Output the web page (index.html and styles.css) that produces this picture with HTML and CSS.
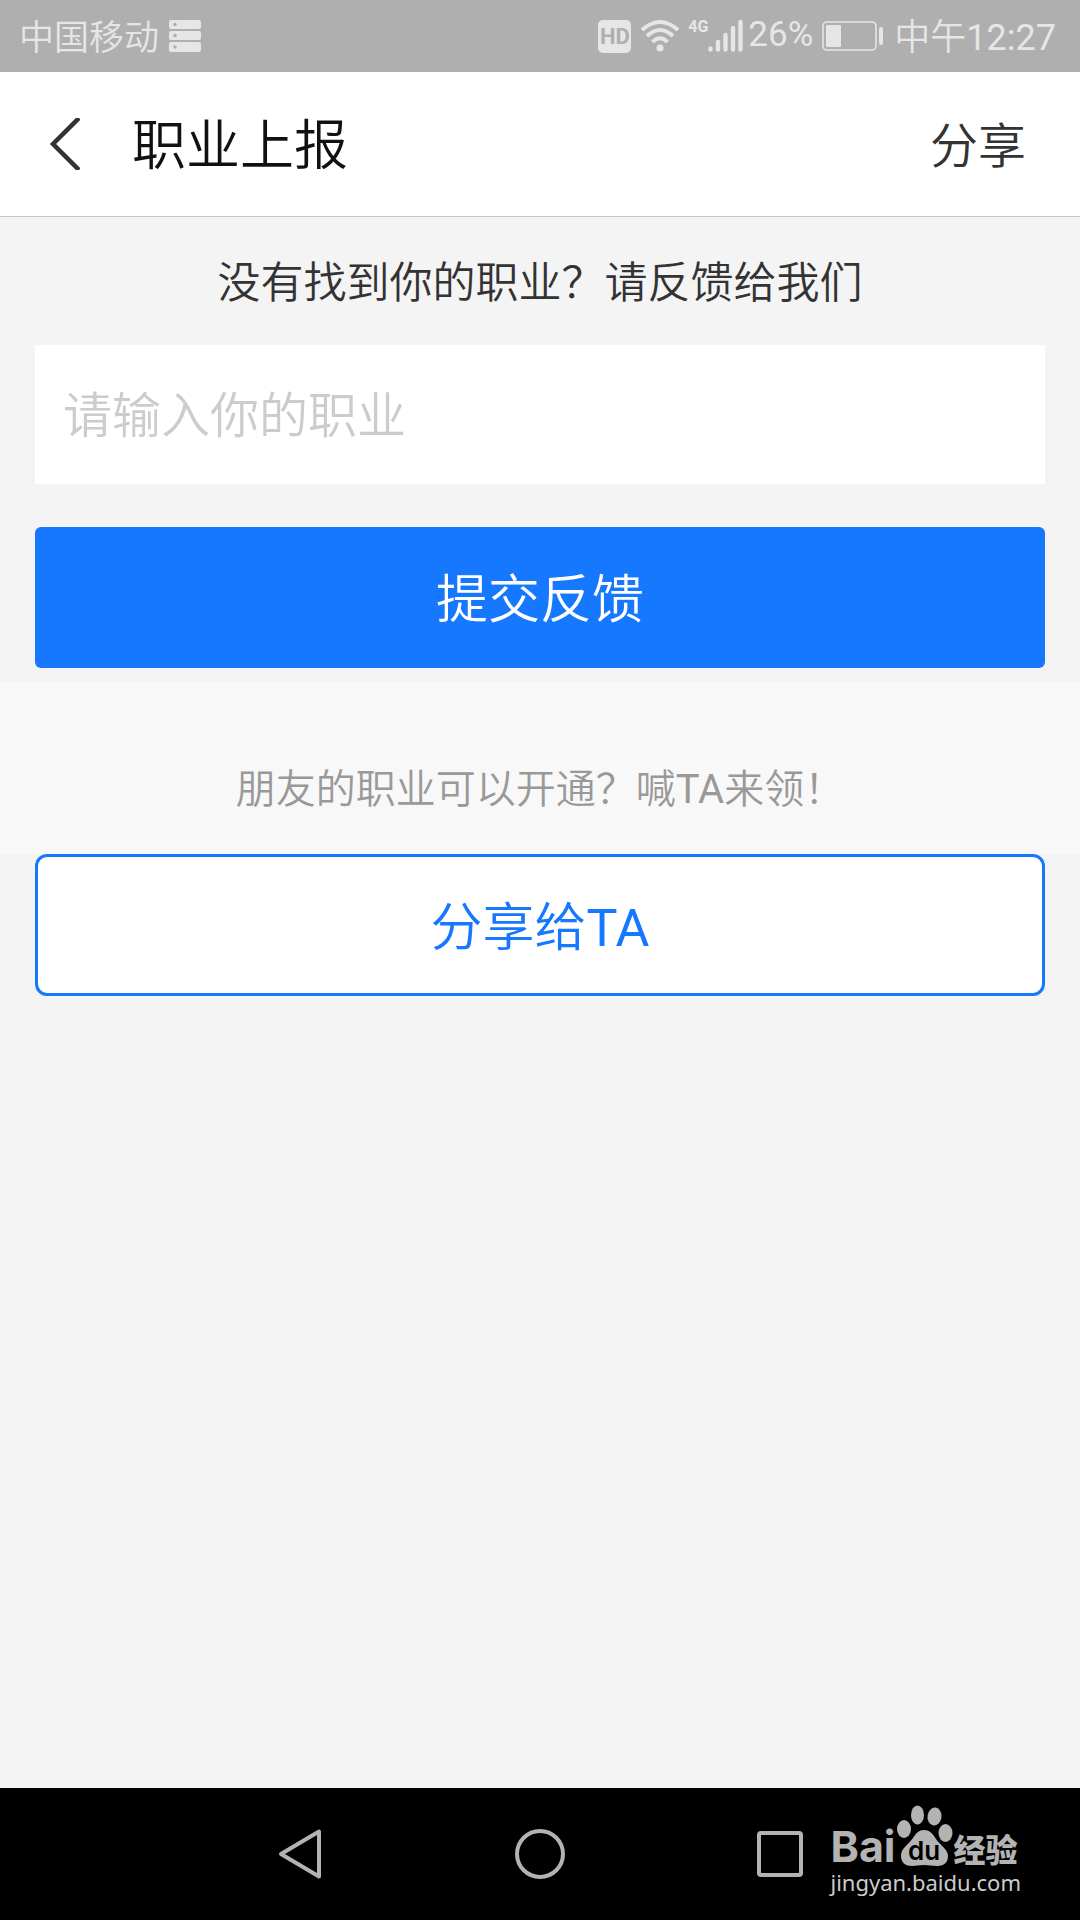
FILE: index.html
```html
<!DOCTYPE html>
<html lang="zh-CN">
<head>
<meta charset="utf-8">
<meta name="viewport" content="width=device-width, initial-scale=1">
<title>职业上报</title>
<link rel="stylesheet" href="styles.css">
</head>
<body>
<div class="status">
  <span class="status-text">中国移动</span>
  <svg class="disk" width="32" height="32" viewBox="0 0 32 32" aria-hidden="true">
    <g fill="#e6e6e6"><rect width="32" height="9" rx="2"/><rect y="11" width="32" height="9" rx="2"/><rect y="22" width="32" height="10" rx="2"/></g>
    <g fill="#afafaf"><circle cx="6" cy="4.500" r="1.800"/><circle cx="6" cy="15.500" r="1.800"/><circle cx="6" cy="27" r="1.800"/></g>
  </svg>
  <div class="status-right">
    <span class="hd">HD</span>
    <svg class="wifi" width="40" height="34" viewBox="0 0 40 34" aria-hidden="true">
      <g fill="none" stroke="#e6e6e6" stroke-width="4">
        <path d="M2 11Q20-5 38 11"/><path d="M7 17Q20 5 33 17"/><path d="M12.500 23Q20 15.500 27.500 23"/>
      </g>
      <circle cx="20" cy="29" r="3.500" fill="#e6e6e6"/>
    </svg>
    <span class="net">4G</span>
    <svg width="35" height="34" viewBox="0 0 35 34" aria-hidden="true">
      <g stroke="#e6e6e6" stroke-width="4.400" stroke-linecap="round">
        <path d="M2.500 29.500v1M10 23v7.500M17.500 16v14.500M25 9v21.500M32.500 3v27.500"/>
      </g>
    </svg>
    <span class="percent latin">26%</span>
    <svg class="battery" width="62" height="30" viewBox="0 0 62 30" aria-hidden="true">
      <rect x="1" y="1" width="53" height="28" rx="4" fill="none" stroke="#e6e6e6" stroke-width="1.600"/>
      <rect x="4" y="4" width="15" height="22" rx="1" fill="#e6e6e6"/>
      <rect x="57" y="6" width="4" height="18" rx="2" fill="#e6e6e6"/>
    </svg>
    <span class="status-text time">中午<span class="latin">12:27</span></span>
  </div>
</div>

<header class="header">
  <button class="back" type="button" aria-label="返回">
    <svg width="32" height="52" viewBox="0 0 32 52" aria-hidden="true"><path d="M31 0L5 26l26 26" fill="none" stroke="#333" stroke-width="4.500"/></svg>
  </button>
  <h1 class="title">职业上报</h1>
  <button class="share-link" type="button">分享</button>
</header>

<main class="main">
  <form class="report">
    <label class="prompt" for="job">没有找到你的职业？请反馈给我们</label>
    <input class="field" id="job" type="text" placeholder="请输入你的职业">
    <button class="btn submit" type="button">提交反馈</button>
  </form>
  <p class="note">朋友的职业可以开通？喊<span class="latin">TA</span>来领！</p>
  <div class="invite">
    <button class="btn outline" type="button">分享给<span class="latin">TA</span></button>
  </div>
</main>

<nav class="nav">
  <button class="key" type="button" aria-label="返回">
    <svg width="50" height="52" viewBox="0 0 50 52" aria-hidden="true"><path d="M44 3.500v45L6 26z" fill="none" stroke="#b3b3b3" stroke-width="4" stroke-linejoin="round"/></svg>
  </button>
  <button class="key" type="button" aria-label="主页">
    <svg width="50" height="52" viewBox="0 0 50 52" aria-hidden="true"><circle cx="25" cy="26" r="23" fill="none" stroke="#b3b3b3" stroke-width="4"/></svg>
  </button>
  <button class="key" type="button" aria-label="最近任务">
    <svg width="50" height="52" viewBox="0 0 50 52" aria-hidden="true"><rect x="4" y="5" width="42" height="42" rx="2" fill="none" stroke="#b3b3b3" stroke-width="4"/></svg>
  </button>
  <div class="mark">
    <div class="mark-logo">
      <span class="mark-bai">Bai</span>
      <svg class="paw" width="58" height="62" viewBox="0 0 58 62" role="img" aria-label="du">
        <g fill="#b3b3b3">
          <ellipse cx="8" cy="24" rx="7" ry="9"/><ellipse cx="21.500" cy="10" rx="6.500" ry="9.500"/>
          <ellipse cx="38.500" cy="11.500" rx="7" ry="9" transform="rotate(8 38.500 11.500)"/><ellipse cx="49.500" cy="28" rx="7" ry="9"/>
          <path d="M28 25c6 0 9 4 12 9 4 6 12 10 12 17 0 8-6 10-11 10-5 0-8-1-13-1s-8 1-12 1C10 61 5 58 5 51c0-8 7-11 12-18 3-5 6-8 11-8z"/>
        </g>
        <text class="mark-du" x="28" y="55" text-anchor="middle">du</text>
      </svg>
      <span class="mark-name">经验</span>
    </div>
    <span class="mark-url">jingyan.baidu.com</span>
  </div>
</nav>
</body>
</html>
```
FILE: styles.css
```css
* {
  box-sizing: border-box;
}

body {
  margin: 0;
  min-height: 100vh;
  display: flex;
  flex-direction: column;
  background: #f4f4f4;
  color: #333;
  font-family: Roboto, "Noto Sans CJK SC", sans-serif;
  font-weight: 350;
}

button,
input {
  margin: 0;
  padding: 0;
  border: 0;
  background: none;
  color: inherit;
  font: inherit;
}

svg {
  display: block;
  flex: none;
}

.latin {
  font-weight: 400;
}

/* status bar */
.status {
  display: flex;
  align-items: center;
  height: 72px;
  padding: 0 24px 0 19px;
  background: #afafaf;
  color: #e6e6e6;
  font-size: 35px;
  line-height: 40px;
  white-space: nowrap;
}

.status-text {
  padding-top: 6px;
}

.disk {
  margin-left: 10px;
}

.status-right {
  display: flex;
  align-items: center;
  margin-left: auto;
}

.hd {
  width: 33px;
  height: 33px;
  border-radius: 5px;
  background: #e6e6e6;
  color: #afafaf;
  font: 700 22px/33px Roboto, sans-serif;
  text-align: center;
}

.wifi {
  margin-left: 9px;
}

.net {
  width: 20px;
  margin: 0 0 18px 8px;
  font: 700 16px/16px Roboto, sans-serif;
}

.percent {
  margin: 0 9px 2px 5px;
}

.battery {
  margin-right: 10px;
}

.time {
  padding-top: 4px;
  font-size: 36px;
}

/* title bar */
.header {
  display: flex;
  align-items: center;
  height: 145px;
  padding: 0 54px 0 48px;
  border-bottom: 1px solid #c8c8c8;
  background: #fff;
}

.title {
  margin: 0 auto 0 52px;
  padding-top: 6px;
  color: #111;
  font-size: 54px;
  line-height: 72px;
  font-weight: 350;
}

.share-link {
  padding-top: 6px;
  font-size: 48px;
  line-height: 72px;
}

/* page content */
.main {
  flex: 1;
}

.report {
  display: flex;
  flex-direction: column;
  padding: 34px 35px 14px;
}

.prompt {
  margin-bottom: 30px;
  font-size: 43px;
  line-height: 64px;
  text-align: center;
}

.field {
  width: 100%;
  height: 139px;
  margin-bottom: 43px;
  padding: 4px 28px 0;
  background: #fff;
  font-size: 49px;
}

.field::placeholder {
  color: #ccc;
  opacity: 1;
}

.btn {
  display: block;
  width: 100%;
  height: 141px;
  padding-bottom: 4px;
  border-radius: 6px;
  font-size: 52px;
}

.submit {
  background: #1677ff;
  color: #fff;
}

.note {
  margin: 0;
  padding: 76px 35px 32px;
  background: #f8f8f8;
  color: #999;
  font-size: 40px;
  line-height: 64px;
  text-align: center;
}

.invite {
  padding: 0 35px;
}

.outline {
  height: 142px;
  border: 3px solid #1677ff;
  border-radius: 12px;
  background: #fff;
  color: #1677ff;
}

/* navigation keys */
.nav {
  position: relative;
  display: flex;
  justify-content: center;
  gap: 190px;
  height: 132px;
  background: #000;
}

.key {
  display: flex;
  align-items: center;
}

.mark {
  position: absolute;
  top: 17px;
  right: 59px;
  color: #b3b3b3;
}

.mark-logo {
  display: flex;
  align-items: flex-end;
  height: 62px;
}

.mark-bai {
  font: 700 43px/42px Inter, sans-serif;
}

.mark-du {
  fill: #000;
  font: 600 26px Inter, sans-serif;
}

.mark-name {
  font: 900 32px/38px "Noto Sans CJK SC", sans-serif;
}

.mark-url {
  display: block;
  color: #ccc;
  font: 400 22px/30px "Noto Sans", sans-serif;
}
```
